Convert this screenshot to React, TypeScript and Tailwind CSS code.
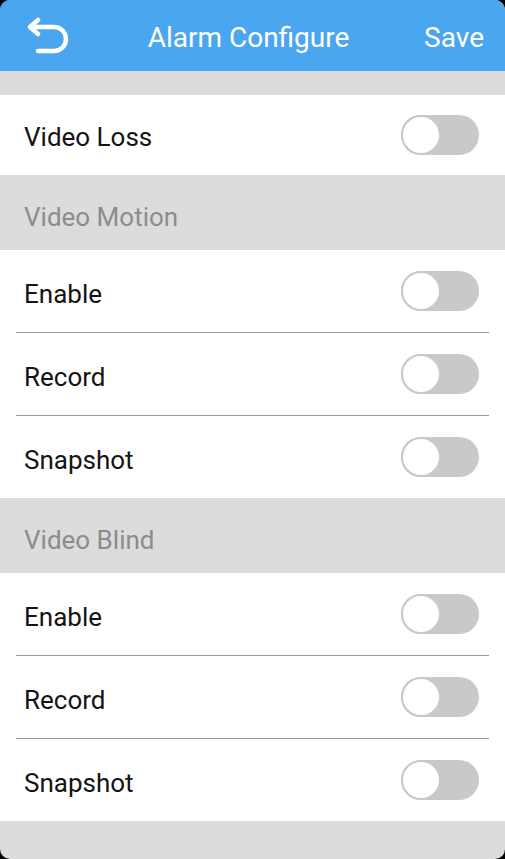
import React from "react";

const font = { fontFamily: "Roboto, 'Noto Sans', sans-serif" };

function Toggle() {
  return (
    <div className="relative w-[78px] h-[40px] rounded-full bg-[#c9c9c9]">
      <div className="absolute left-0 top-0 w-[40px] h-[40px] rounded-full bg-white border-2 border-[#c9c9c9]" />
    </div>
  );
}

function Row({ label, divider }: { label: string; divider?: boolean }) {
  return (
    <div className="bg-white">
      <div className="h-[82px] flex items-center justify-between pl-[24px] pr-[26px]">
        <span className="text-[26px] text-[#141414] leading-none pt-[5px]">{label}</span>
        <Toggle />
      </div>
      {divider && <div className="mx-[16px] h-px bg-[#9a9a9a]" />}
    </div>
  );
}

function Section({ label }: { label: string }) {
  return (
    <div className="h-[75px] bg-[#dcdcdc] flex items-center pl-[24px]">
      <span className="text-[26px] text-[#8c8c8c] leading-none pt-[8px]">{label}</span>
    </div>
  );
}

export default function App() {
  return (
    <div className="w-[505px] h-[859px] bg-black" style={font}>
      <div className="w-full h-full rounded-[10px] overflow-hidden bg-[#dcdcdc] flex flex-col">
        <div className="h-[71px] bg-[#4ba6f0] flex items-center justify-between pl-[26px] pr-[21px] relative shrink-0">
          <svg width="44" height="38" viewBox="0 0 44 38" fill="none" stroke="white" strokeWidth="4.5" strokeLinecap="round" strokeLinejoin="round">
            <path d="M12 3 L4 10 L12 17" />
            <path d="M5 10 H28 a12 12 0 0 1 0 24 H12" />
          </svg>
          <span className="absolute left-0 right-0 text-center text-[28px] text-white pointer-events-none pr-[8px] leading-none pt-[4px]">Alarm Configure</span>
          <span className="text-[28px] text-white leading-none pt-[4px]">Save</span>
        </div>
        <div className="h-[24px] shrink-0" />
        <div className="h-[80px] bg-white flex items-center justify-between pl-[24px] pr-[26px]">
          <span className="text-[26px] text-[#141414] leading-none pt-[4px]">Video Loss</span>
          <Toggle />
        </div>
        <Section label="Video Motion" />
        <Row label="Enable" divider />
        <Row label="Record" divider />
        <Row label="Snapshot" />
        <Section label="Video Blind" />
        <Row label="Enable" divider />
        <Row label="Record" divider />
        <Row label="Snapshot" />
        <div className="flex-1" />
      </div>
    </div>
  );
}
